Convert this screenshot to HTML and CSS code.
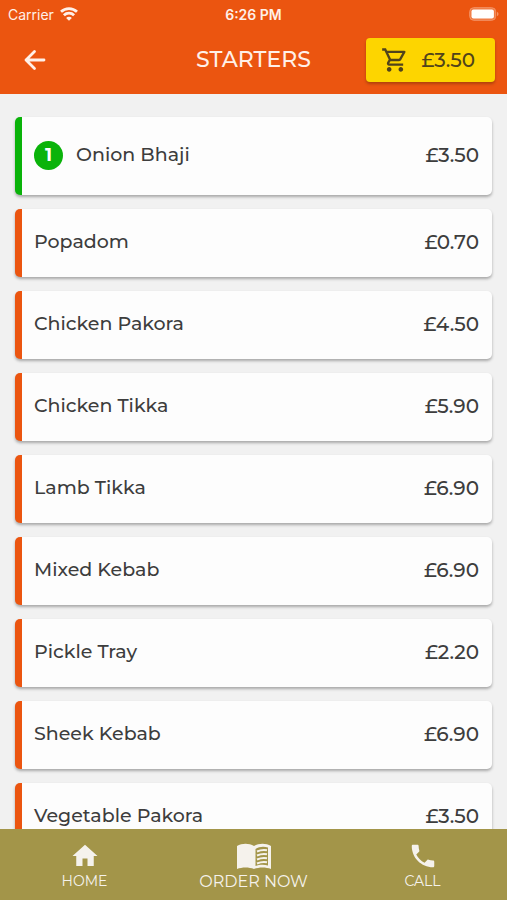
FILE: index.html
```html
<!DOCTYPE html>
<html lang="en">
<head>
    <meta charset="UTF-8">
    <meta name="viewport" content="width=device-width, initial-scale=1.0">
    <title>Starters</title>
    <link rel="stylesheet" href="styles.css">
</head>
<body>
    <header class="header">
        <div class="status-bar">
            <div class="carrier">
                <span>Carrier</span>
                <svg width="18" height="14" viewBox="0 0 18 14" fill="none" stroke="currentColor" stroke-width="2.8">
                    <path d="M1 4.8C5.5.6 12.5.6 17 4.8"/>
                    <path d="M3.9 8.3C6.8 5.5 11.200 5.5 14.1 8.3"/>
                    <path d="M9 13.8L6.100 10.900C7.700 9.400 10.300 9.400 11.900 10.900Z" fill="currentColor" stroke="none"/>
                </svg>
            </div>
            <span class="time">6:26 PM</span>
            <svg class="battery" width="30" height="14" viewBox="0 0 30 14">
                <rect x=".7" y=".7" width="26" height="12.6" rx="4" fill="#f07a42" stroke="#f39468"/>
                <rect x="2.5" y="2.5" width="22.4" height="9" rx="2" fill="#fff"/>
                <path d="M28 5v4c1-.3 1.5-1.2 1.5-2S29 5.3 28 5z" fill="#f39468"/>
            </svg>
        </div>
        <div class="title-bar">
            <button type="button" class="back" aria-label="Back">
                <svg width="22" height="22" viewBox="0 0 22 22" fill="none" stroke="currentColor" stroke-width="2.8" stroke-linecap="round" stroke-linejoin="round">
                    <path d="M20 11H2M10.5 2.500L2 11l8.500 8.500"/>
                </svg>
            </button>
            <h1>STARTERS</h1>
            <button type="button" class="cart">
                <svg width="28" height="28" viewBox="0 0 24 24" fill="currentColor">
                    <path d="M15.550 13c.75 0 1.410-.41 1.750-1.030l3.580-6.490A.996.996 0 0 0 20.010 4H5.210l-.94-2H1v2h2l3.600 7.590-1.350 2.440C4.520 15.370 5.480 17 7 17h12v-2H7l1.100-2h7.450zM6.160 6h12.150l-2.760 5H8.530L6.160 6zM7 18c-1.100 0-1.990.9-1.990 2S5.900 22 7 22s2-.9 2-2-.9-2-2-2zm10 0c-1.100 0-1.990.9-1.990 2s.89 2 1.990 2 2-.9 2-2-.9-2-2-2z"/>
                </svg>
                <span>£3.50</span>
            </button>
        </div>
    </header>

    <main class="menu">
        <ul class="menu-list">
            <li><button type="button" class="item selected"><span class="count">1</span><span class="name">Onion Bhaji</span><span class="price">£3.50</span></button></li>
            <li><button type="button" class="item"><span class="name">Popadom</span><span class="price">£0.70</span></button></li>
            <li><button type="button" class="item"><span class="name">Chicken Pakora</span><span class="price">£4.50</span></button></li>
            <li><button type="button" class="item"><span class="name">Chicken Tikka</span><span class="price">£5.90</span></button></li>
            <li><button type="button" class="item"><span class="name">Lamb Tikka</span><span class="price">£6.90</span></button></li>
            <li><button type="button" class="item"><span class="name">Mixed Kebab</span><span class="price">£6.90</span></button></li>
            <li><button type="button" class="item"><span class="name">Pickle Tray</span><span class="price">£2.20</span></button></li>
            <li><button type="button" class="item"><span class="name">Sheek Kebab</span><span class="price">£6.90</span></button></li>
            <li><button type="button" class="item"><span class="name">Vegetable Pakora</span><span class="price">£3.50</span></button></li>
        </ul>
    </main>

    <nav class="tabs">
        <a href="#home" class="tab">
            <svg width="30" height="30" viewBox="0 0 24 24" fill="currentColor">
                <path d="M10 20v-6h4v6h5v-8h3L12 3 2 12h3v8z"/>
            </svg>
            <span>HOME</span>
        </a>
        <a href="#order" class="tab main-tab">
            <svg width="36" height="30" viewBox="0 0 36 30" fill="currentColor">
                <path d="M1 5C6 2 13 2 18 5C23 2 30 2 35 5V28C30 26 23 26 18 28C13 26 6 26 1 28Z"/>
                <path d="M19.5 8C23 5.600 28 5.300 32 6.600V24.500C28 23.300 23 23.600 19.500 25Z" fill="#a39549"/>
                <path d="M21 10.500C24.500 9 28 8.700 31 9.300M21 14.500C24.500 13 28 12.700 31 13.300M21 18.500C24.500 17 28 16.700 31 17.300M21 22.500C24.500 21 28 20.700 31 21.300" fill="none" stroke="currentColor" stroke-width="2"/>
            </svg>
            <span>ORDER NOW</span>
        </a>
        <a href="#call" class="tab">
            <svg width="30" height="30" viewBox="0 0 24 24" fill="currentColor">
                <path d="M6.620 10.790c1.440 2.830 3.760 5.140 6.590 6.590l2.200-2.200c.27-.27.67-.36 1.020-.24 1.120.37 2.330.57 3.570.57.55 0 1 .45 1 1V20c0 .55-.45 1-1 1-9.390 0-17-7.610-17-17 0-.55.45-1 1-1h3.500c.55 0 1 .45 1 1 0 1.250.2 2.450.57 3.570.11.35.03.74-.25 1.020l-2.200 2.200z"/>
            </svg>
            <span>CALL</span>
        </a>
    </nav>
</body>
</html>
```
FILE: styles.css
```css
* {
    box-sizing: border-box;
}
body {
    font-family: Montserrat, Inter, sans-serif;
    background: #f1f1f1;
    margin: 0;
    height: 100vh;
    display: flex;
    flex-direction: column;
    color: #3d3d3d;
}
button {
    font-family: inherit;
    color: inherit;
    border: none;
    cursor: pointer;
}
svg {
    display: block;
}
.header {
    background: #eb5510;
    color: #fff0e8;
    padding-bottom: 12px;
}
.status-bar {
    display: grid;
    grid-template-columns: 1fr auto 1fr;
    align-items: center;
    height: 28px;
    padding: 0 8px;
    font-family: Inter, sans-serif;
    font-size: 14px;
}
.carrier {
    display: flex;
    align-items: center;
    gap: 6px;
}
.time {
    font-weight: 600;
}
.battery {
    justify-self: end;
}
.title-bar {
    display: grid;
    grid-template-columns: 1fr auto 1fr;
    align-items: center;
    padding: 10px 12px 0;
}
.back {
    justify-self: start;
    background: none;
    padding: 11px 12px;
}
h1 {
    margin: 0;
    padding-bottom: 2px;
    font-size: 22px;
    font-weight: 500;
}
.cart {
    justify-self: end;
    display: flex;
    align-items: center;
    gap: 12px;
    height: 44px;
    padding: 0 20px 0 15px;
    background: #fdd500;
    color: #50431b;
    border-radius: 4px;
    box-shadow: 0 2px 3px rgba(0, 0, 0, 0.25);
    font-size: 20px;
    font-weight: 500;
}
.menu {
    flex: 1;
    min-height: 0;
    overflow-y: auto;
    scrollbar-width: none;
}
.menu-list {
    list-style: none;
    margin: 0;
    padding: 23px 15px;
    display: flex;
    flex-direction: column;
    gap: 14px;
}
.item {
    width: 100%;
    min-height: 68px;
    display: flex;
    align-items: center;
    gap: 13px;
    padding: 0 13px 2px 12px;
    background: #fdfdfd;
    border-left: 7px solid #eb5510;
    border-radius: 5px;
    box-shadow: 0 2px 3px rgba(0, 0, 0, 0.3);
    font-size: 19px;
    line-height: 22px;
    font-weight: 500;
    text-align: left;
}
.item.selected {
    min-height: 78px;
    border-left-color: #0ab30a;
}
.name {
    flex: 1;
}
.price {
    font-size: 20px;
}
.count {
    width: 29px;
    height: 29px;
    line-height: 29px;
    border-radius: 50%;
    background: #0ab30a;
    color: #fff;
    font-size: 18px;
    font-weight: 700;
    text-align: center;
}
.tabs {
    display: grid;
    grid-template-columns: repeat(3, 1fr);
    height: 71px;
    background: #a39549;
}
.tab {
    display: flex;
    flex-direction: column;
    align-items: center;
    padding-top: 12px;
    color: #f5f2ec;
    font-size: 14px;
    line-height: 20px;
    text-decoration: none;
}
.main-tab {
    font-size: 16px;
    line-height: 22px;
}
```
